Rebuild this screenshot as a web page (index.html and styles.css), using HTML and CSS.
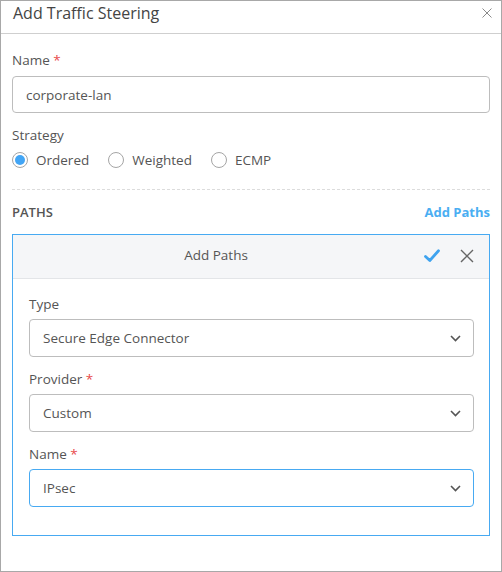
FILE: index.html
```html
<!DOCTYPE html>
<html>
<head>
<meta charset="utf-8">
<link rel="stylesheet" href="styles.css">
</head>
<body>
<div class="modal">
  <div class="modal-header">
    <div class="modal-title">Add Traffic Steering</div>
    <svg class="close" width="10" height="10" viewBox="0 0 10 10"><path d="M0.5 0.5L9.5 9.5M9.5 0.5L0.5 9.5" stroke="#8a8a8a" stroke-width="1" fill="none"/></svg>
  </div>
  <div class="modal-body">
    <div class="label">Name <span class="req">*</span></div>
    <div class="input">corporate-lan</div>

    <div class="label strategy">Strategy</div>
    <div class="radios">
      <div class="radio"><span class="circle checked"></span>Ordered</div>
      <div class="radio"><span class="circle"></span>Weighted</div>
      <div class="radio"><span class="circle"></span>ECMP</div>
    </div>

    <div class="divider"></div>

    <div class="paths-row">
      <div class="paths-title">PATHS</div>
      <div class="paths-link">Add Paths</div>
    </div>

    <div class="box">
      <div class="box-header">
        <div class="box-title">Add Paths</div>
        <div class="box-actions">
          <svg width="16" height="14" viewBox="0 0 16 14"><path d="M1.5 7.5L5.8 11.5L14.5 1.8" stroke="#3fa3ef" stroke-width="2.8" fill="none" stroke-linecap="round" stroke-linejoin="round"/></svg>
          <svg width="14" height="14" viewBox="0 0 14 14"><path d="M1 1L13 13M13 1L1 13" stroke="#666" stroke-width="1.4" fill="none"/></svg>
        </div>
      </div>
      <div class="box-body">
        <div class="label">Type</div>
        <div class="select">Secure Edge Connector<svg class="chev" width="11" height="7" viewBox="0 0 11 7"><path d="M1 1L5.5 5.5L10 1" stroke="#555" stroke-width="1.6" fill="none"/></svg></div>
        <div class="label field">Provider <span class="req">*</span></div>
        <div class="select">Custom<svg class="chev" width="11" height="7" viewBox="0 0 11 7"><path d="M1 1L5.5 5.5L10 1" stroke="#555" stroke-width="1.6" fill="none"/></svg></div>
        <div class="label field">Name <span class="req">*</span></div>
        <div class="select focused">IPsec<svg class="chev" width="11" height="7" viewBox="0 0 11 7"><path d="M1 1L5.5 5.5L10 1" stroke="#555" stroke-width="1.6" fill="none"/></svg></div>
      </div>
    </div>
  </div>
</div>
</body>
</html>
```

FILE: styles.css
```css
* { box-sizing: border-box; }
html, body { margin: 0; padding: 0; background: #fff; }
body { font-family: "Open Sans", "Liberation Sans", sans-serif; color: #555; font-size: 13.5px; }

.modal {
  width: 502px;
  height: 572px;
  border: 1px solid #a8a8a8;
  background: #fff;
}

.modal-header {
  height: 33px;
  border-bottom: 1px solid #cfcfcf;
  display: flex;
  align-items: flex-start;
  justify-content: space-between;
  padding: 1px 9px 0 12px;
}
.modal-title { font-size: 16px; color: #444; line-height: 22px; }
.close { margin-top: 6px; }

.modal-body { padding: 17px 11px 0 11px; }

.label { line-height: 19px; font-size: 13.5px; color: #555; }
.req { color: #e84a4a; }

.input {
  margin-top: 6px;
  height: 37px;
  border: 1px solid #bdbdbd;
  border-radius: 4px;
  padding: 0 13px;
  display: flex;
  align-items: center;
  color: #555;
}

.strategy { margin-top: 13px; }

.radios { display: flex; gap: 19px; margin-top: 4px; height: 22px; align-items: center; }
.radio { display: flex; align-items: center; gap: 8px; color: #555; line-height: 19px; }
.circle {
  width: 16px; height: 16px; border-radius: 50%;
  border: 1px solid #a5a5a5; background: #fff;
  display: inline-flex; align-items: center; justify-content: center;
}
.circle.checked::after {
  content: ""; width: 10px; height: 10px; border-radius: 50%; background: #42a5f5;
}

.divider { margin-top: 18px; border-top: 1px dashed #dcdcdc; }

.paths-row {
  display: flex; justify-content: space-between; align-items: center;
  margin-top: 13px; line-height: 18px;
}
.paths-title { font-size: 13px; font-weight: 600; color: #555; }
.paths-link { font-size: 13px; font-weight: 700; color: #4aaef2; }

.box {
  margin-top: 13px;
  border: 1px solid #47aaf2;
  height: 302px;
}
.box-header {
  height: 44px;
  background: #f5f6f8;
  border-bottom: 1px solid #e3e5e8;
  display: flex;
  align-items: center;
}
.box-title { flex: 1; text-align: center; font-size: 13.5px; color: #555; padding-bottom: 3px; }
.box-actions { width: 70px; display: flex; align-items: center; gap: 20px; padding-left: 5px; padding-bottom: 1px; }

.box-body { padding: 15px 15px 0 16px; }
.box-body .label { line-height: 20px; }
.box-body .field { margin-top: 12px; }

.select {
  margin-top: 5px;
  height: 38px;
  border: 1px solid #bdbdbd;
  border-radius: 4px;
  padding: 0 11px 0 13px;
  display: flex;
  align-items: center;
  justify-content: space-between;
  color: #555;
}
.select.focused { border-color: #47aaf2; }
.chev { margin-right: 1px; }
```
